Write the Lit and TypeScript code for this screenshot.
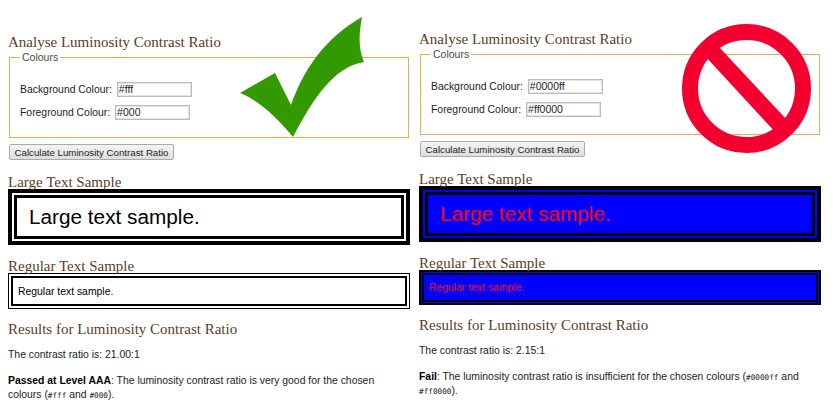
import { LitElement, html, css } from "lit";
import { customElement, property } from "lit/decorators.js";
import { classMap } from "lit/directives/class-map.js";

@customElement("contrast-panel")
class ContrastPanel extends LitElement {
  @property() bg = "#fff";
  @property() fg = "#000";
  @property() ratio = "21.00:1";
  @property({ type: Boolean }) fail = false;

  static styles = css`
    :host { display: block; position: relative; font-family: "Liberation Sans", Arial, sans-serif; font-size: 10.4px; color: #222; }
    h2 { margin: 0 0 -1px; font: normal 15px/16px "Liberation Serif", serif; color: #5b3d1e; }
    fieldset { margin: 3px 0 0 1px; width: 400px; height: 86px; box-sizing: border-box; border: 1px solid #e3b04b; padding: 0 10px; }
    legend { padding: 0 2px; color: #4a4a3a; font-size: 10.5px; line-height: 10px; }
    .row { display: flex; align-items: center; height: 16px; margin-bottom: 7px; gap: 5px; }
    .row:first-of-type { margin-top: 19px; }
    input { width: 75px; height: 15px; box-sizing: border-box; border: 1px solid #bbb; box-shadow: inset 0 0 0 .5px #ccc; padding: 0 1px; font: 10.5px "Liberation Sans", Arial, sans-serif; color: #222; margin: 0; }
    button { display: block; margin: 6px 0 0 1px; width: 165px; height: 16px; padding: 0; white-space: nowrap; border: 1px solid #aaa; border-radius: 2px; background: linear-gradient(#f4f4f4, #dedede); font: 9.7px "Liberation Sans", Arial, sans-serif; color: #222; }
    .h-large { margin-top: 14px; }
    .h-regular { margin-top: 13px; }
    .outer { width: 402px; box-sizing: border-box; }
    .large { height: 56px; border: 4px solid #000; padding: 2px; }
    .large .inner { height: 100%; box-sizing: border-box; border: 3px solid #000; padding-left: 12px; display: flex; align-items: center; font-size: 20.75px; }
    .regular { height: 36px; border: 1px solid #000; padding: 2px; }
    .regular.bad { height: 35px; border-width: 2px; padding: 1px; }
    .regular .inner { height: 100%; box-sizing: border-box; border: 2px solid #000; padding-left: 5px; display: flex; align-items: center; }
    .h-results { margin-top: 12px; }
    p { margin: 0; line-height: 14.5px; width: 385px; }
    .p1 { margin-top: 12px; }
    .p2 { margin-top: 11px; }
    b { color: #000; }
    code { font-family: "DejaVu Sans Mono", "Liberation Mono", monospace; font-size: 7.7px; line-height: 1; }
    svg { position: absolute; display: block; }
    .mark-ok { left: 232px; top: 17px; }
    .mark-no { left: 263px; top: 24px; }
  `;

  render() {
    const box = `background:${this.bg};color:${this.fg}`;
    return html`
      <h2>Analyse Luminosity Contrast Ratio</h2>
      <fieldset>
        <legend>Colours</legend>
        <div class="row"><label>Background Colour:</label><input .value=${this.bg} /></div>
        <div class="row"><label>Foreground Colour:</label><input .value=${this.fg} /></div>
      </fieldset>
      <button>Calculate Luminosity Contrast Ratio</button>
      <h2 class="h-large">Large Text Sample</h2>
      <div class="outer large" style=${box}><div class="inner">Large text sample.</div></div>
      <h2 class="h-regular">Regular Text Sample</h2>
      <div class=${classMap({ outer: true, regular: true, bad: this.fail })} style=${box}><div class="inner">Regular text sample.</div></div>
      <h2 class="h-results">Results for Luminosity Contrast Ratio</h2>
      <p class="p1">The contrast ratio is: ${this.ratio}</p>
      ${this.fail
        ? html`<p class="p2"><b>Fail</b>: The luminosity contrast ratio is insufficient for the chosen colours (<code>${this.bg}</code> and <code>${this.fg}</code>).</p>`
        : html`<p class="p2"><b>Passed at Level AAA</b>: The luminosity contrast ratio is very good for the chosen colours (<code>${this.bg}</code> and <code>${this.fg}</code>).</p>`}
      ${this.fail
        ? html`<svg class="mark-no" width="130" height="130" viewBox="0 0 130 130">
            <circle cx="64.500" cy="64.500" r="56.500" fill="none" stroke="#f30031" stroke-width="16"/>
            <path d="M24 33 L36 22 L106 97 L94 109 Z" fill="#f30031"/>
          </svg>`
        : html`<svg class="mark-ok" width="125" height="122" viewBox="0 0 125 122">
            <path d="M122 0 C90 18 66 46 51 88 L35 56 L0 76 C20 84 38 102 53 120 C74 80 94 50 124 45 C118 32 119 16 122 0 Z" fill="#339900"/>
          </svg>`}
    `;
  }
}

@customElement("app-root")
class AppRoot extends LitElement {
  static styles = css`
    :host { display: block; width: 835px; height: 420px; background: #fff; overflow: hidden; }
    .wrap { display: grid; grid-template-columns: 411px 416px; padding-left: 8px; }
    .left { padding-top: 34px; }
    .right { padding-top: 31px; }
  `;
  render() {
    return html`<div class="wrap">
      <contrast-panel class="left" bg="#fff" fg="#000" ratio="21.00:1"></contrast-panel>
      <contrast-panel class="right" bg="#0000ff" fg="#ff0000" ratio="2.15:1" fail></contrast-panel>
    </div>`;
  }
}
